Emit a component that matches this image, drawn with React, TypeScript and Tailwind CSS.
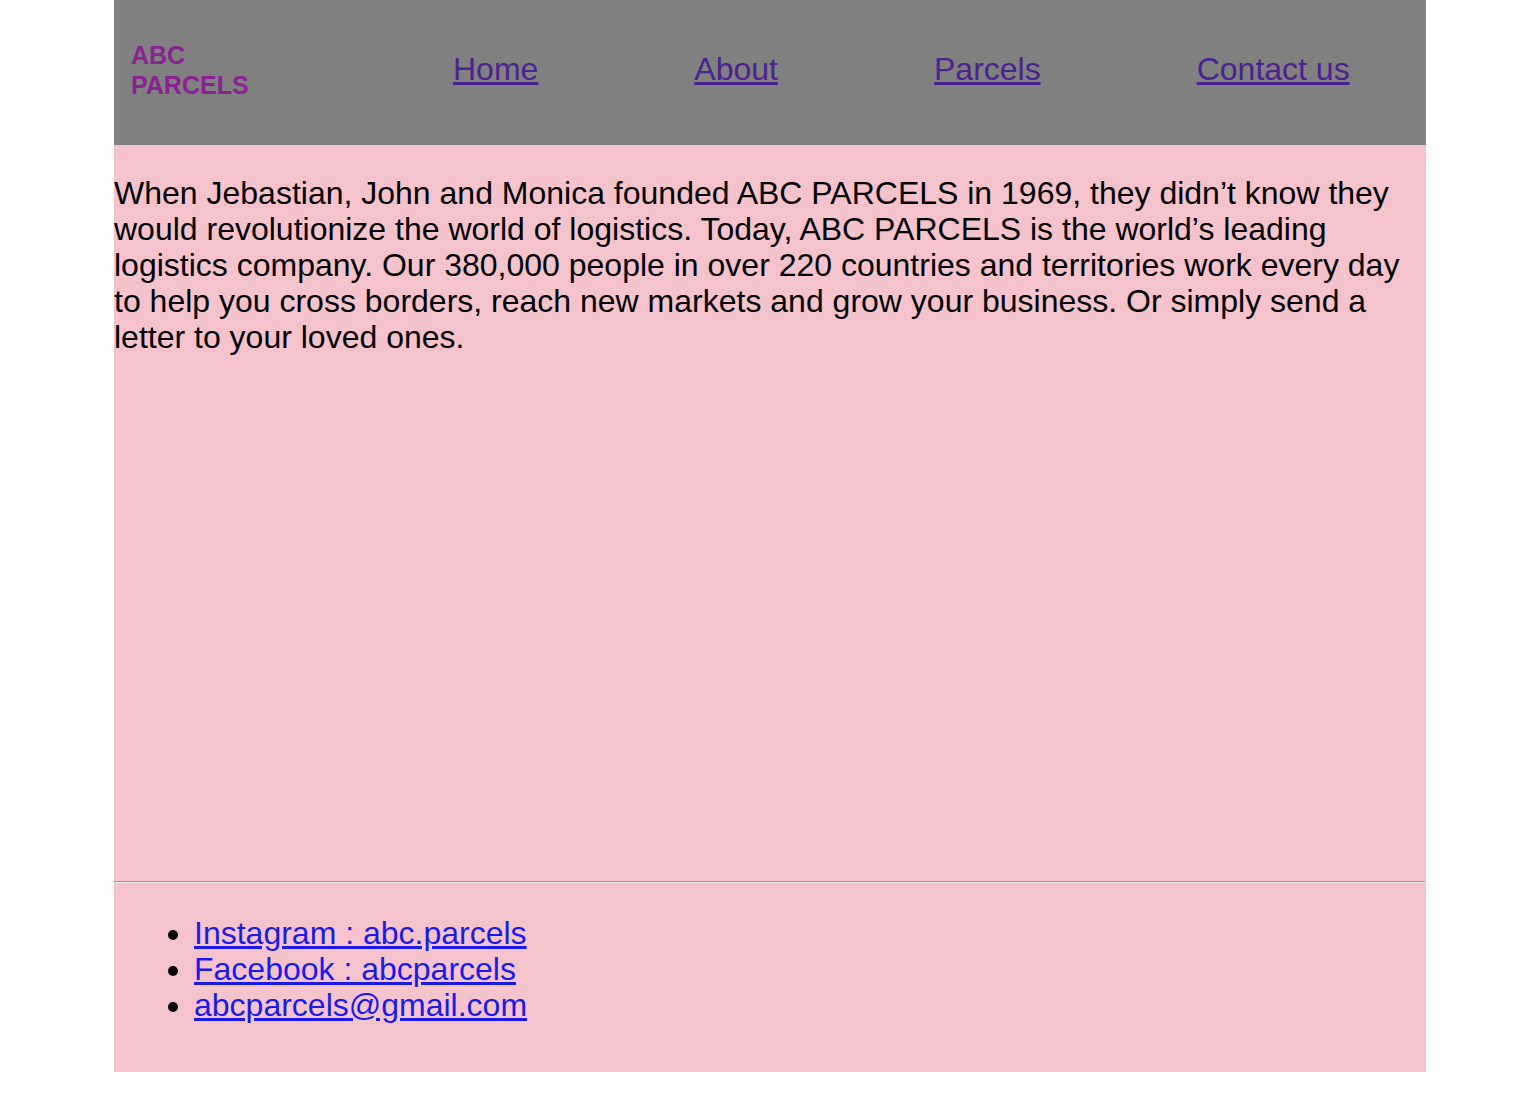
export default function App() {
  const font = { fontFamily: '"Liberation Sans", Arial, Helvetica, sans-serif' };
  return (
    <div className="w-full bg-white min-h-[1112px]" style={font}>
      <div className="mx-[114px] w-[1312px]">
        <header className="h-[145px] bg-[#808080] flex items-center pb-[8px]">
          <div className="pl-[17px] pt-[2px] w-[339px] text-[25px] leading-[30px] font-bold text-[#8a2292]">
            ABC
            <br />
            PARCELS
          </div>
          <nav className="flex gap-[156px] text-[32px] leading-[36px] text-[#4b2390]">
            <a href="#" className="underline">Home</a>
            <a href="#" className="underline">About</a>
            <a href="#" className="underline">Parcels</a>
            <a href="#" className="underline">Contact us</a>
          </nav>
        </header>
        <main className="bg-[#f5c3cb] h-[736px] pt-[30px]">
          <p className="text-[32px] leading-[36px] text-black">
            When Jebastian, John and Monica founded ABC PARCELS in 1969, they didn’t know they would revolutionize the world of logistics. Today, ABC PARCELS is the world’s leading logistics company. Our 380,000 people in over 220 countries and territories work every day to help you cross borders, reach new markets and grow your business. Or simply send a letter to your loved ones.
          </p>
        </main>
        <footer className="bg-[#f5c3cb] h-[191px]">
          <div className="h-[2px] border-t border-l border-[#9a9a9a] border-b border-b-[#ececec] border-r border-r-[#ececec]" />
          <ul className="list-disc pl-[80px] pt-[32px] text-[32px] leading-[36px] text-black">
            <li><a href="#" className="underline text-[#1a1aee]">Instagram : abc.parcels</a></li>
            <li><a href="#" className="underline text-[#1a1aee]">Facebook : abcparcels</a></li>
            <li><a href="#" className="underline text-[#1a1aee]">abcparcels@gmail.com</a></li>
          </ul>
        </footer>
      </div>
    </div>
  );
}
